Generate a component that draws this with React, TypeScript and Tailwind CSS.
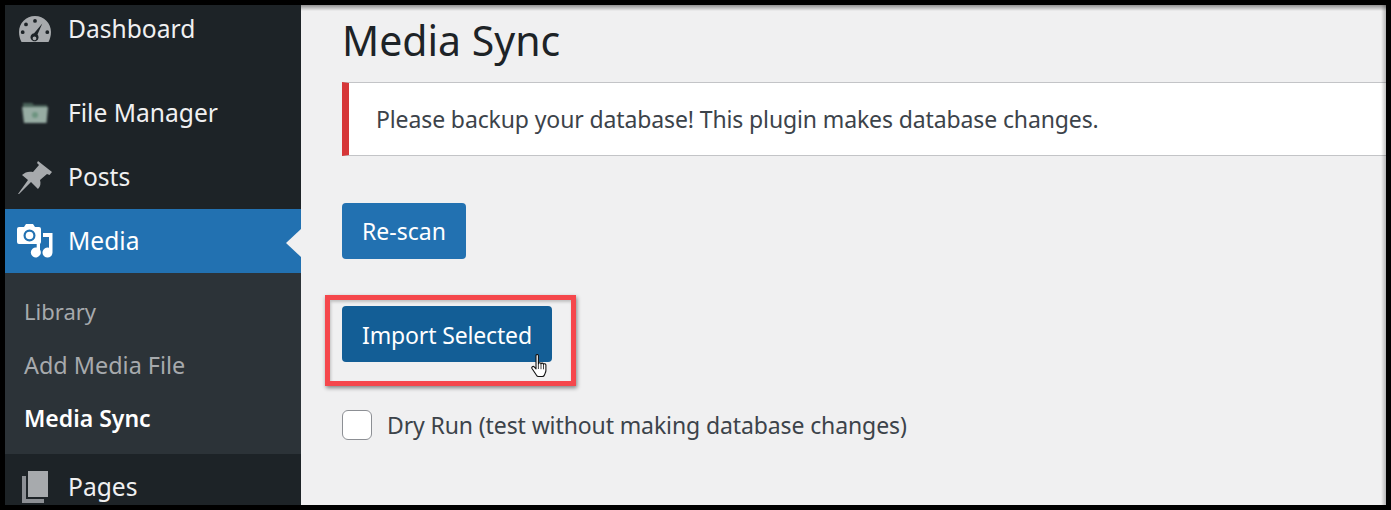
const FONT = "font-['Noto_Sans','Open_Sans',sans-serif]";

const DashboardIcon = () => (
  <svg viewBox="0 0 32 26" className="w-[32px] h-[26px]" fill="#a7aaad">
    <path fillRule="evenodd" d="M16 0C7 0 0 7 0 16c0 3.700 1 7 2.500 10h27C31 23 32 19.700 32 16 32 7 25 0 16 0zM16 3a1.900 1.900 0 1 1 0 3.800A1.900 1.900 0 0 1 16 3zM7 6.500a1.900 1.900 0 1 1 0 3.800 1.900 1.900 0 0 1 0-3.800zM23.300 7.400l-4.800 11.200a4 4 0 1 1-3.400-1.300zM3.700 14.300a1.900 1.900 0 1 1 0 3.800 1.900 1.900 0 0 1 0-3.800zM28.300 14.300a1.900 1.900 0 1 1 0 3.800 1.900 1.900 0 0 1 0-3.800zM15.500 20.400a1.900 1.900 0 1 0 0 3.800 1.900 1.900 0 0 0 0-3.800z" />
  </svg>
);

const FileManagerIcon = () => (
  <svg viewBox="0 0 28 24" className="w-[28px] h-[24px]" style={{ filter: 'blur(0.8px)' }}>
    <path d="M2 2h9l2 2h13v3H2z" fill="#4a6259" />
    <path d="M1 6h26l-1.500 16H3z" fill="#97aca3" />
    <circle cx="14" cy="14" r="3" fill="#6d9480" />
  </svg>
);

const PostsIcon = () => (
  <svg viewBox="0 0 34 33" className="w-[34px] h-[33px]" fill="#a7aaad">
    <path d="M20 0l14 11-2.500 3-2.500-1-7 6c1 3.500.5 6.500-2 9l-7-7L1 33H0l10-14-6-5c3-3 7-4 11-3l6-7-2-2z" />
  </svg>
);

const MediaIcon = () => (
  <svg viewBox="0 0 36 34" className="w-[36px] h-[34px]" fill="#fff">
    <path fillRule="evenodd" d="M9 0h7l2 3h4a2 2 0 0 1 2 2v13a2 2 0 0 1-2 2H2a2 2 0 0 1-2-2V5a2 2 0 0 1 2-2h5zM12.500 5.500a6 6 0 1 0 0 12 6 6 0 0 0 0-12z" />
    <circle cx="12.500" cy="11.500" r="3.800" />
    <path d="M26 9h9.500v19.500a5 5 0 1 1-3.500-4.700V13h-6z" />
    <path d="M23 18.500v7.500h.2a5 5 0 1 1-3.500-2.500V20h1.500a2 2 0 0 0 1.800-1.500z" />
  </svg>
);

const PagesIcon = () => (
  <svg viewBox="0 0 26 32" className="w-[26px] h-[32px]">
    <path d="M6 0h20v26H6z" fill="#a7aaad" />
    <path d="M0 5h4v23h18v4H0z" fill="#8c8f94" />
  </svg>
);

const HandCursor = () => (
  <svg viewBox="0 0 18 25" className="w-[18px] h-[25px]" fill="#fff" stroke="#111" strokeWidth="1.100" strokeLinejoin="round">
    <path d="M5 1.500c0-1.300 2.400-1.300 2.400 0v8.300c.3-1.400 2.500-1.300 2.600.2.300-1.300 2.400-1.100 2.500.4.400-1 2.300-.8 2.400.6v5.500c0 1-.3 1.800-.7 2.600l-.8 1.900c-.3.900-1 1.500-2 1.500H7.500c-1 0-1.600-.4-2-1.200L1 14.500c-.8-1.500 1-2.800 2.200-1.600L5 14.800z" />
    <path d="M7.400 10v5M10 10.200v5M12.500 10.800v4.500" fill="none" strokeWidth="0.800" />
  </svg>
);

const MenuItem = ({ icon, label, className = '' }: { icon: React.ReactNode; label: string; className?: string }) => (
  <div className={`flex items-center shrink-0 ${className}`}>
    <div className="w-[60px] mr-[3px] flex justify-center shrink-0">{icon}</div>
    <span className="text-[24.6px] leading-none pt-[1px]">{label}</span>
  </div>
);

export default function App() {
  return (
    <div className={`w-[1391px] h-[510px] bg-black p-[5px] overflow-hidden ${FONT}`}>
      <div className="flex h-[500px] overflow-hidden bg-[#f0f0f1]">
        {/* Admin menu */}
        <div className="w-[296px] shrink-0 bg-[#1d2327] text-[#f0f0f1] flex flex-col overflow-hidden">
          <MenuItem icon={<DashboardIcon />} label="Dashboard" className="h-[48px] mb-[28px]" />
          <MenuItem icon={<FileManagerIcon />} label="File Manager" className="h-[64px]" />
          <MenuItem icon={<PostsIcon />} label="Posts" className="h-[64px]" />
          <div className="relative shrink-0">
            <MenuItem icon={<MediaIcon />} label="Media" className="h-[64px] bg-[#2271b1] text-white" />
            <div className="absolute right-0 top-[20px] border-y-[14px] border-r-[15px] border-y-transparent border-r-[#f0f0f1]" />
          </div>
          <div className="h-[181px] shrink-0 bg-[#2c3338] pl-[19px] pt-[13px] flex flex-col text-[23px] text-[#a7aaad]">
            <div className="h-[53px] flex items-center text-[22px] pb-[2px]">Library</div>
            <div className="h-[53px] flex items-center text-[23.4px]">Add Media File</div>
            <div className="h-[53px] flex items-center font-semibold text-white">Media Sync</div>
          </div>
          <MenuItem icon={<PagesIcon />} label="Pages" className="h-[66px]" />
        </div>

        {/* Page content */}
        <div className="relative flex-1 pl-[41px] text-[#3c434a] overflow-hidden">
          <h1 className="h-[77px] text-[#1d2327] text-[41px] leading-[70px]">Media Sync</h1>
          <div className="h-[74px] flex items-center bg-white border-y border-[#c3c4c7] border-l-[7px] border-l-[#d63638] pl-[27px] text-[23px] tracking-[-0.12px]">
            Please backup your database! This plugin makes database changes.
          </div>
          <button className="block mt-[47px] w-[124px] h-[56px] rounded-[4px] bg-[#2271b1] text-white text-[23px]">Re-scan</button>
          <div className="relative mt-[47px] w-[210px]">
            <button className="block w-[210px] h-[56px] pt-[2px] rounded-[4px] bg-[#135e96] text-white text-[23px] tracking-[-0.15px]">Import Selected</button>
            <div className="absolute -left-[17px] -top-[11px] w-[251px] h-[91px] border-[5px] border-[#f5474c] shadow-[1px_2px_4px_rgba(0,0,0,0.45),inset_1px_2px_3px_rgba(0,0,0,0.2)]" />
            <div className="absolute left-[189px] top-[48px]"><HandCursor /></div>
          </div>
          <label className="flex items-center mt-[46px] text-[23px] tracking-[-0.11px]">
            <span className="w-[30px] h-[30px] rounded-[6px] bg-white border border-[#8c8f94] mr-[15px]" />
            Dry Run (test without making database changes)
          </label>
          {/* shadow from the screenshot frame */}
          <div className="absolute inset-x-0 top-0 h-[6px] bg-gradient-to-b from-black/40 to-transparent" />
          <div className="absolute inset-y-0 right-0 w-[5px] bg-gradient-to-l from-black/25 to-transparent" />
        </div>
      </div>
    </div>
  );
}
